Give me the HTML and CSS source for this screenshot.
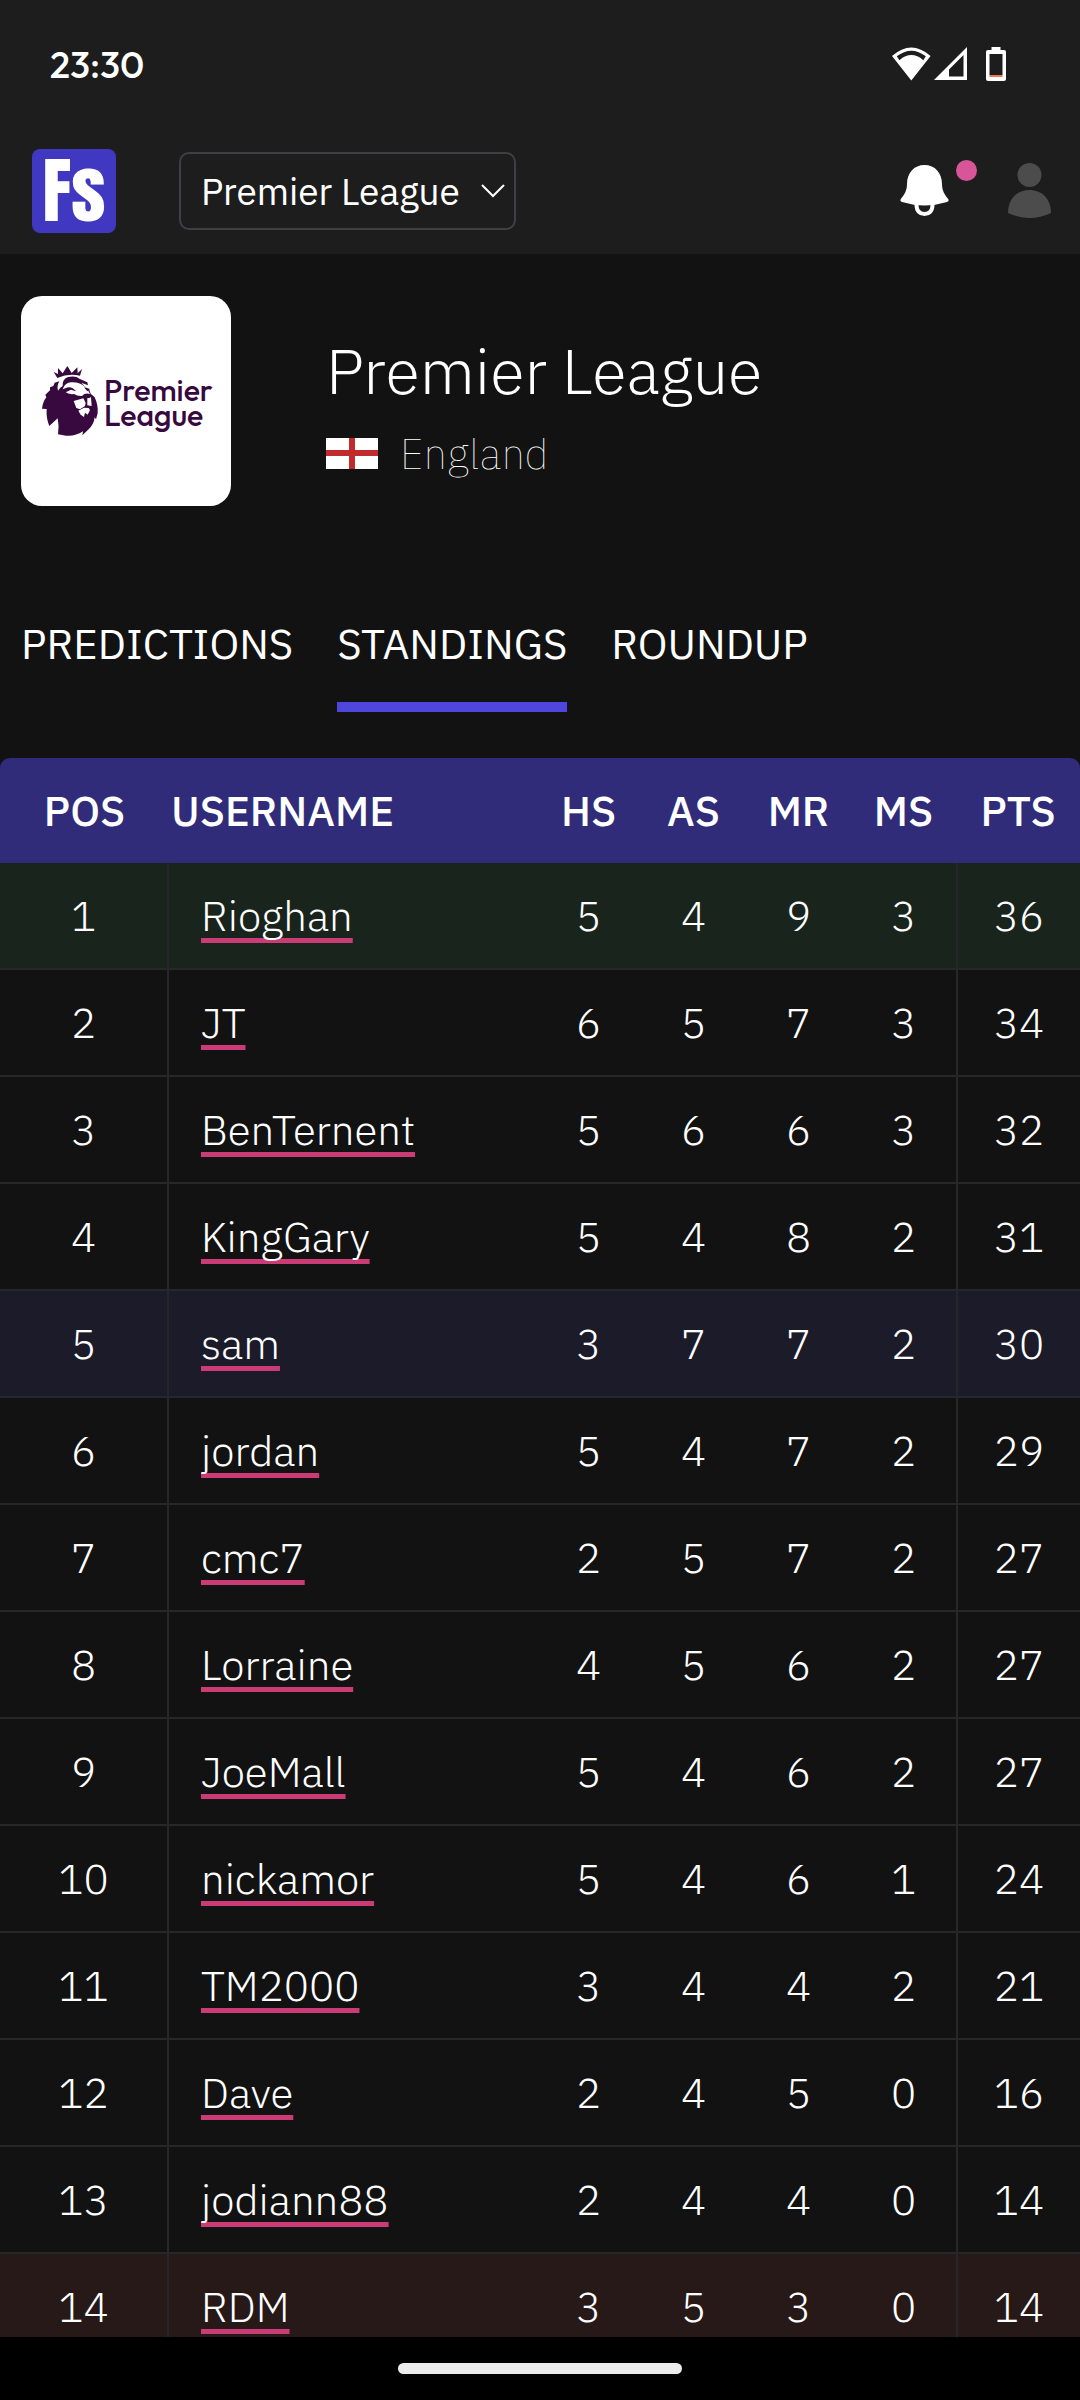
FILE: index.html
```html
<!DOCTYPE html>
<html lang="en">
<head>
<meta charset="utf-8">
<meta name="viewport" content="width=device-width, initial-scale=1">
<title>Premier League standings</title>
<link rel="stylesheet" href="styles.css">
</head>
<body>
<div class="status-bar">
  <time class="clock">23:30</time>
  <div class="status-icons">
    <svg width="39" height="34" viewBox="0 0 39 34" aria-hidden="true"><path fill="#fff" fill-rule="evenodd" d="M0 9Q19.300-8 38.600 9L19.300 33.500ZM4.800 9.300Q19.300-2 33.800 9.300L31.300 13.200Q19.300 3 7.500 13.200Z"/></svg>
    <svg width="34" height="34" viewBox="0 0 34 34" aria-hidden="true"><path fill="#fff" fill-rule="evenodd" d="M0 33H33V0ZM15 22.500V29.500H29.500V8Z"/></svg>
    <svg class="battery" width="20" height="34" viewBox="0 0 20 34" aria-hidden="true"><path fill="#fff" fill-rule="evenodd" d="M5.500 0H14.500V3H18Q20 3 20 5V32Q20 34 18 34H2Q0 34 0 32V5Q0 3 2 3H5.500ZM3.500 7V28H16.500V7Z"/><path fill="#f0784e" d="M3.500 28h13v2h-13z"/></svg>
  </div>
</div>
<header class="app-header">
  <a class="brand" href="#" aria-label="Fs home">Fs</a>
  <div class="league-picker">
    <select aria-label="League"><option>Premier League</option></select>
    <svg class="chevron" width="24" height="14" viewBox="0 0 24 14" aria-hidden="true"><path d="M1 1L12 12L23 1" fill="none" stroke="#fff" stroke-width="2"/></svg>
  </div>
  <div class="actions">
    <button class="icon-button bell" aria-label="Notifications">
      <svg width="49" height="54" viewBox="0 0 49 54" aria-hidden="true"><path fill="#fff" d="M24.500 1C14 1 7 9 7 20C7 27 4 31 .8 35C0 36.500 .5 37.500 2 38Q24.500 45 47 38C48.500 37.500 49 36.500 48.200 35C45 31 42 27 42 20C42 9 35 1 24.500 1Z"/><path d="M16.500 41C16.500 47 20 50 24.500 50S32.500 47 32.500 41" fill="none" stroke="#fff" stroke-width="4"/></svg>
      <span class="dot"></span>
    </button>
    <button class="icon-button" aria-label="Account">
      <svg width="43" height="56" viewBox="0 0 43 56" aria-hidden="true"><g fill="#4c4c4c"><circle cx="21.500" cy="12" r="12"/><path d="M0 50C0 36 9 27 21.500 27S43 36 43 50Q21.500 60 0 50Z"/></g></svg>
    </button>
  </div>
</header>
<main class="content">
  <section class="league">
    <svg class="crest" viewBox="63 48 630 630" role="img" aria-label="Premier League logo">
      <g fill="#38093f">
        <path d="M172 294L161 276L174 282L174 264L188 280L202 258L215 279L232 262L233 280L246 267L240 287Q205 279 172 294Z"/>
        <path d="M164 308L178 304Q170 318 174 332Q181 322 188 318Q186 300 202 292Q226 286 238 296L262 307L264 316L244 308Q254 320 268 330L272 341L284 352Q295 375 293 400L288 418L284 412Q282 432 266 448L247 466L249 454Q225 470 198 467L174 463Q178 438 173 415L148 438Q138 415 140 387L126 386Q128 366 139 352L136 344L150 331L150 322L160 318Z"/>
      </g>
      <g fill="#fff">
        <path d="M188 328Q194 308 214 307Q240 306 257 322L264 331L270 342Q255 338 246 348Q232 349 222 342Q206 344 197 337L213 329L228 334Q216 319 204 322Z"/>
        <path d="M221 363L250 355L257 369L255 378L240 388L229 384Z"/>
        <path d="M262 355L273 352L275 378L262 376Z"/>
        <path d="M235 392L252 383L266 384L270 390L263 404L255 398L252 411L242 404Z"/>
      </g>
      <path d="M255 344L270 344L268 354L258 354ZM252 322L270 327L262 334Z" fill="#38093f"/>
      <g class="crest-text"><text x="312" y="362">Premier</text><text x="312" y="439">League</text></g>
    </svg>
    <div class="league-info">
      <h1>Premier League</h1>
      <p class="country">
        <svg width="52" height="31" viewBox="0 0 52 31" aria-hidden="true"><path fill="#fff" d="M0 0h52v31H0z"/><path fill="#c02b2d" d="M23 0h6v31h-6zM0 12h52v6H0z"/></svg>
        England
      </p>
    </div>
  </section>
  <nav class="tabs" aria-label="League sections">
    <a href="#">PREDICTIONS</a>
    <a class="active" href="#" aria-current="page">STANDINGS</a>
    <a href="#">ROUNDUP</a>
  </nav>
  <table class="standings">
    <colgroup><col class="col-pos"><col><col class="col-stat"><col class="col-stat"><col class="col-stat"><col class="col-stat"><col class="col-pts"></colgroup>
    <thead><tr><th>POS</th><th>USERNAME</th><th>HS</th><th>AS</th><th>MR</th><th>MS</th><th>PTS</th></tr></thead>
    <tbody>
      <tr class="leader"><td>1</td><td><a href="#">Rioghan</a></td><td>5</td><td>4</td><td>9</td><td>3</td><td>36</td></tr>
      <tr><td>2</td><td><a href="#">JT</a></td><td>6</td><td>5</td><td>7</td><td>3</td><td>34</td></tr>
      <tr><td>3</td><td><a href="#">BenTernent</a></td><td>5</td><td>6</td><td>6</td><td>3</td><td>32</td></tr>
      <tr><td>4</td><td><a href="#">KingGary</a></td><td>5</td><td>4</td><td>8</td><td>2</td><td>31</td></tr>
      <tr class="me"><td>5</td><td><a href="#">sam</a></td><td>3</td><td>7</td><td>7</td><td>2</td><td>30</td></tr>
      <tr><td>6</td><td><a href="#">jordan</a></td><td>5</td><td>4</td><td>7</td><td>2</td><td>29</td></tr>
      <tr><td>7</td><td><a href="#">cmc7</a></td><td>2</td><td>5</td><td>7</td><td>2</td><td>27</td></tr>
      <tr><td>8</td><td><a href="#">Lorraine</a></td><td>4</td><td>5</td><td>6</td><td>2</td><td>27</td></tr>
      <tr><td>9</td><td><a href="#">JoeMall</a></td><td>5</td><td>4</td><td>6</td><td>2</td><td>27</td></tr>
      <tr><td>10</td><td><a href="#">nickamor</a></td><td>5</td><td>4</td><td>6</td><td>1</td><td>24</td></tr>
      <tr><td>11</td><td><a href="#">TM2000</a></td><td>3</td><td>4</td><td>4</td><td>2</td><td>21</td></tr>
      <tr><td>12</td><td><a href="#">Dave</a></td><td>2</td><td>4</td><td>5</td><td>0</td><td>16</td></tr>
      <tr><td>13</td><td><a href="#">jodiann88</a></td><td>2</td><td>4</td><td>4</td><td>0</td><td>14</td></tr>
      <tr class="last"><td>14</td><td><a href="#">RDM</a></td><td>3</td><td>5</td><td>3</td><td>0</td><td>14</td></tr>
    </tbody>
  </table>
</main>
<div class="gesture-bar"><span class="handle"></span></div>
</body>
</html>
```
FILE: styles.css
```css
* {
  box-sizing: border-box;
}

body {
  margin: 0;
  height: 100vh;
  display: flex;
  flex-direction: column;
  background: #121212;
  color: #fff;
  font-family: "IBM Plex Sans", Roboto, sans-serif;
  font-size: 42px;
  line-height: 63px;
}

a {
  color: inherit;
  text-decoration: none;
}

.status-bar {
  display: flex;
  flex: none;
  align-items: center;
  justify-content: space-between;
  height: 128px;
  padding: 0 74px 0 50px;
  background: #1d1d1d;
}

.clock {
  font-family: Outfit, Roboto, sans-serif;
  font-size: 37px;
  font-weight: 500;
}

.status-icons {
  display: flex;
  gap: 3px;
}

.battery {
  margin-left: 15px;
}

.app-header {
  display: flex;
  flex: none;
  align-items: center;
  height: 126px;
  padding: 0 29px 0 32px;
  background: #1d1d1d;
}

.brand {
  width: 84px;
  height: 84px;
  border-radius: 8px;
  background: #4138c2;
  font-family: Anton, Impact, "Roboto Condensed", Roboto, sans-serif;
  font-size: 72px;
  line-height: 84px;
  text-align: center;
}

.league-picker {
  position: relative;
  margin-left: 63px;
}

.league-picker select {
  appearance: none;
  display: block;
  width: 337px;
  height: 78px;
  padding: 0 20px;
  border: 2px solid #3f3f46;
  border-radius: 10px;
  background: transparent;
  color: inherit;
  font: inherit;
  font-size: 37px;
}

.chevron {
  position: absolute;
  right: 11px;
  top: 32px;
  pointer-events: none;
}

.actions {
  display: flex;
  gap: 59px;
  margin-left: auto;
}

.icon-button {
  position: relative;
  display: flex;
  align-items: center;
  padding: 0;
  border: 0;
  background: none;
}

.dot {
  position: absolute;
  top: -3px;
  right: -28px;
  width: 21px;
  height: 21px;
  border-radius: 50%;
  background: #d9559a;
}

.content {
  flex: 1;
  min-height: 0;
  overflow: hidden;
}

.league {
  display: flex;
  gap: 95px;
  padding: 42px 21px;
}

.crest {
  flex: none;
  width: 210px;
  height: 210px;
  border-radius: 21px;
  background: #fff;
}

.crest-text {
  fill: #38093f;
  font-family: Outfit, Poppins, sans-serif;
  font-size: 91px;
  font-weight: 500;
}

h1 {
  margin: 32px 0 0;
  font-size: 63px;
  font-weight: 300;
  line-height: 84px;
}

.country {
  display: flex;
  align-items: center;
  gap: 22px;
  margin: 10px 0 0;
  font-weight: 100;
}

.tabs {
  display: flex;
  gap: 44px;
  padding: 64px 21px 46px;
}

.tabs a {
  padding-bottom: 27px;
  border-bottom: 10px solid transparent;
}

.tabs .active {
  border-color: #4f46dc;
}

.standings {
  width: 100%;
  table-layout: fixed;
  border-collapse: separate;
  border-spacing: 0;
  text-align: center;
}

.col-pos {
  width: 169px;
}

.col-stat {
  width: 105px;
}

.col-pts {
  width: 124px;
}

th {
  height: 105px;
  padding: 0;
  background: #302c7a;
  font-weight: 500;
}

th:first-child {
  border-top-left-radius: 10px;
}

th:last-child {
  border-top-right-radius: 10px;
}

th:nth-child(2) {
  padding-left: 2px;
  text-align: left;
}

td {
  height: 107px;
  padding: 0;
  border-bottom: 2px solid #27272a;
  font-weight: 300;
}

td:first-child {
  border-right: 2px solid #27272a;
}

td:nth-child(2) {
  padding-left: 32px;
  text-align: left;
}

td:last-child {
  border-left: 2px solid #27272a;
}

td a {
  text-decoration: underline 5px #cb3b76;
  text-decoration-skip-ink: none;
  text-underline-offset: 7px;
}

.leader {
  background: #18241c;
}

.me {
  background: #1c1b29;
}

.last {
  background: #261918;
}

.gesture-bar {
  display: flex;
  flex: none;
  align-items: center;
  justify-content: center;
  height: 63px;
  background: #000;
}

.handle {
  width: 284px;
  height: 11px;
  border-radius: 6px;
  background: #ececec;
}
```
